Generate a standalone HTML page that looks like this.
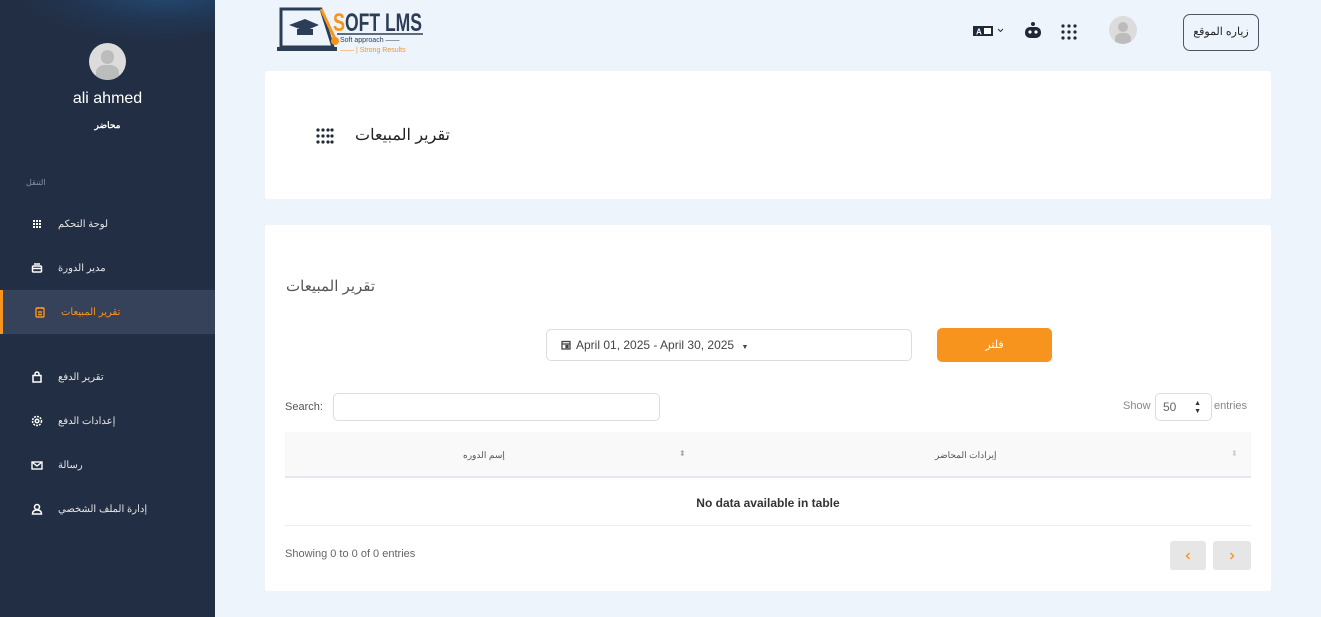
<!DOCTYPE html>
<html><head><meta charset="utf-8"><style>
*{box-sizing:border-box;margin:0;padding:0}
body{width:1321px;height:617px;overflow:hidden;background:#edf4fc;font-family:"Liberation Sans","Noto Sans CJK SC",sans-serif;position:relative;color:#333}
.sb{position:absolute;left:0;top:0;width:215px;height:617px;background:#222e43;overflow:hidden}
.sb .wave{position:absolute;left:20px;top:-50px;width:240px;height:90px;border-radius:50%;background:radial-gradient(ellipse at 60% 40%,rgba(40,100,160,.6) 0%,rgba(31,68,112,.35) 45%,rgba(34,46,67,0) 75%)}
.av{position:absolute;border-radius:50%;background:#dcdcdc;overflow:hidden}
.av:before{content:"";position:absolute;left:32%;top:20%;width:36%;height:36%;border-radius:50%;background:#bcbcbc}
.av:after{content:"";position:absolute;left:20%;top:60%;width:60%;height:50%;border-radius:40% 40% 0 0;background:#bcbcbc}
.it{position:absolute;left:0;width:215px;height:44px;color:#e6e6e6;font-size:10px;display:flex;align-items:center}
.it .ic{position:absolute;left:31px;width:12px;height:12px}
.it span{position:absolute;left:58px}
.card{position:absolute;left:265px;width:1006px;background:#fff;border-radius:3px}
.t{position:absolute;white-space:nowrap}
</style></head><body>
<div class="sb">
<div class="wave"></div>
<div class="av" style="left:89px;top:43px;width:37px;height:37px"></div>
<div class="t" style="left:0;width:215px;text-align:center;top:90px;color:#fff;font-size:16px">ali ahmed</div>
<div class="t" style="left:0;width:215px;text-align:center;top:120px;color:#fff;font-size:9px;font-weight:bold">محاضر</div>
<div class="t" style="left:26px;top:178px;color:#8a93a3;font-size:8px">التنقل</div>
<div class="it" style="top:202px"><svg class="ic" viewBox="0 0 12 12" fill="#fff"><rect x="2" y="2" width="2" height="2"/><rect x="5" y="2" width="2" height="2"/><rect x="8" y="2" width="2" height="2"/><rect x="2" y="5" width="2" height="2"/><rect x="5" y="5" width="2" height="2"/><rect x="8" y="5" width="2" height="2"/><rect x="2" y="8" width="2" height="2"/><rect x="5" y="8" width="2" height="2"/><rect x="8" y="8" width="2" height="2"/></svg><span>لوحة التحكم</span></div>
<div class="it" style="top:246px"><svg class="ic" viewBox="0 0 12 12" fill="none" stroke="#fff" stroke-width="1.5"><rect x="1.5" y="4" width="9" height="6" rx="1"/><path d="M3 2h6M1.5 6.5h9"/></svg><span>مدير الدورة</span></div>
<div class="it" style="top:290px;background:#36425a;color:#f7941d;border-left:3px solid #f7941d"><svg class="ic" viewBox="0 0 12 12" fill="none" stroke="#f7941d" stroke-width="1.4" style="left:31px"><rect x="2" y="2" width="8" height="9" rx="1"/><path d="M4 1v2M8 1v2M4 6h4M4 8.5h4"/></svg><span style="left:58px">تقرير المبيعات</span></div>
<div class="it" style="top:355px"><svg class="ic" viewBox="0 0 12 12" fill="none" stroke="#fff" stroke-width="1.5"><rect x="2" y="4.5" width="8" height="6.5"/><path d="M4 4.5V3a2 2 0 0 1 4 0v1.5"/></svg><span>تقرير الدفع</span></div>
<div class="it" style="top:399px"><svg class="ic" viewBox="0 0 12 12" fill="none" stroke="#fff" stroke-width="1.5"><circle cx="6" cy="6" r="4.5" stroke-dasharray="2 1"/><circle cx="6" cy="6" r="1.8"/></svg><span>إعدادات الدفع</span></div>
<div class="it" style="top:443px"><svg class="ic" viewBox="0 0 12 12" fill="none" stroke="#fff" stroke-width="1.4"><rect x="1" y="3" width="10" height="7"/><path d="M1 3l5 4 5-4"/></svg><span>رسالة</span></div>
<div class="it" style="top:487px"><svg class="ic" viewBox="0 0 12 12" fill="none" stroke="#fff" stroke-width="1.5"><circle cx="6" cy="4" r="2.5"/><path d="M1.5 11c0-3 2-4 4.5-4s4.5 1 4.5 4z"/></svg><span>إدارة الملف الشخصي</span></div>
</div>

<svg style="position:absolute;left:277px;top:5px" width="150" height="52" viewBox="0 0 150 52">
<path d="M4 4h40l12 38H4z" fill="none" stroke="#2c3e57" stroke-width="3"/>
<path d="M0 42h60v4H0z" fill="#2c3e57"/>
<path d="M12 20l16-6 14 6-14 6z" fill="#2c3e57"/><path d="M20 24v6h16v-6" fill="#2c3e57"/>
<path d="M44 4l14 30" stroke="#f7941d" stroke-width="3"/><circle cx="58" cy="36" r="4" fill="#f7941d"/>
<text x="56" y="26" font-family="Liberation Sans" font-weight="bold" font-size="25" fill="#f7941d" textLength="12" lengthAdjust="spacingAndGlyphs">S</text>
<text x="68" y="26" font-family="Liberation Sans" font-weight="bold" font-size="25" fill="#2c3e57" textLength="77" lengthAdjust="spacingAndGlyphs">OFT LMS</text>
<path d="M60 29h86" stroke="#2c3e57" stroke-width="1.5"/>
<text x="63" y="37" font-size="7" fill="#2c3e57" font-family="Liberation Sans">Soft approach ——</text>
<text x="63" y="47" font-size="7" fill="#f7941d" font-family="Liberation Sans">—— | Strong Results</text>
</svg>

<svg style="position:absolute;left:973px;top:25px" width="34" height="12" viewBox="0 0 34 12"><rect x="0" y="1" width="20" height="10" fill="#1f2937"/><text x="3" y="9.5" font-size="8" fill="#fff" font-weight="bold" font-family="Liberation Sans">A</text><rect x="11" y="3" width="7" height="6" fill="#fff"/><path d="M25 4l2.5 2.5L30 4" stroke="#333" fill="none"/></svg>
<svg style="position:absolute;left:1024px;top:22px" width="18" height="17" viewBox="0 0 18 17"><circle cx="9" cy="2" r="2" fill="#1f2937"/><rect x="1" y="5" width="16" height="11" rx="5" fill="#1f2937"/><circle cx="6" cy="10" r="1.6" fill="#fff"/><circle cx="12" cy="10" r="1.6" fill="#fff"/></svg>
<svg style="position:absolute;left:1061px;top:24px" width="16" height="16" viewBox="0 0 16 16" fill="#1f2937"><circle cx="2" cy="2" r="1.6"/><circle cx="8" cy="2" r="1.6"/><circle cx="14" cy="2" r="1.6"/><circle cx="2" cy="8" r="1.6"/><circle cx="8" cy="8" r="1.6"/><circle cx="14" cy="8" r="1.6"/><circle cx="2" cy="14" r="1.6"/><circle cx="8" cy="14" r="1.6"/><circle cx="14" cy="14" r="1.6"/></svg>
<div class="av" style="left:1109px;top:16px;width:28px;height:28px"></div>
<div style="position:absolute;left:1183px;top:14px;width:76px;height:37px;border:1px solid #4b5563;border-radius:7px;font-size:11px;text-align:center;line-height:35px;color:#222">زياره الموقع</div>

<div class="card" style="top:71px;height:128px">
<div class="t" style="left:90px;top:54px;font-size:16px;color:#222">تقرير المبيعات</div>
<svg style="position:absolute;left:51px;top:57px" width="18" height="16" viewBox="0 0 18 16" fill="#1f2937"><circle cx="2" cy="2" r="1.6"/><circle cx="7" cy="2" r="1.6"/><circle cx="12" cy="2" r="1.6"/><circle cx="16" cy="2" r="1.6"/><circle cx="2" cy="8" r="1.6"/><circle cx="7" cy="8" r="1.6"/><circle cx="12" cy="8" r="1.6"/><circle cx="16" cy="8" r="1.6"/><circle cx="2" cy="14" r="1.6"/><circle cx="7" cy="14" r="1.6"/><circle cx="12" cy="14" r="1.6"/><circle cx="16" cy="14" r="1.6"/></svg>
</div>

<div class="card" style="top:225px;height:366px">
<div class="t" style="left:21px;top:52px;font-size:15px;color:#555">تقرير المبيعات</div>
<div style="position:absolute;left:281px;top:104px;width:366px;height:32px;border:1px solid #ddd;border-radius:5px;font-size:12px;color:#444;line-height:30px;padding-left:29px">April 01, 2025 - April 30, 2025 <span style="font-size:7px;margin-left:4px">▼</span>
<svg style="position:absolute;left:14px;top:10px" width="10" height="10" viewBox="0 0 10 10" fill="none" stroke="#444" stroke-width="1.3"><rect x="1" y="1.5" width="8" height="7.5"/><path d="M1 4h8"/><rect x="5" y="5.5" width="2" height="2" fill="#444"/></svg></div>
<div style="position:absolute;left:672px;top:103px;width:115px;height:34px;background:#f7941d;border-radius:5px;color:#fff;font-size:11px;text-align:center;line-height:34px">فلتر</div>
<div class="t" style="left:20px;top:176px;font-size:11px;color:#555">Search:</div>
<div style="position:absolute;left:68px;top:168px;width:327px;height:28px;border:1px solid #ddd;border-radius:5px"></div>
<div class="t" style="left:858px;top:175px;font-size:11px;color:#888">Show</div>
<div style="position:absolute;left:890px;top:168px;width:57px;height:28px;border:1px solid #ddd;border-radius:5px;font-size:12px;color:#666;line-height:26px;padding-left:7px">50<span style="position:absolute;right:10px;font-size:7px;color:#333;line-height:8px;top:6px">▲<br>▼</span></div>
<div class="t" style="left:949px;top:175px;font-size:11px;color:#888">entries</div>
<div style="position:absolute;left:20px;top:207px;width:966px;height:46px;background:#f9f9f9;border-bottom:2px solid #e3e8ef"></div>
<div class="t" style="left:198px;top:225px;font-size:9px;color:#555">إسم الدوره</div>
<div class="t" style="left:414px;top:224px;font-size:8px;color:#aaa">⬍</div>
<div class="t" style="left:670px;top:225px;font-size:9px;color:#555">إيرادات المحاضر</div>
<div class="t" style="left:966px;top:224px;font-size:8px;color:#ccc">⬍</div>
<div class="t" style="left:0;width:1006px;text-align:center;top:271px;font-size:12px;font-weight:bold;color:#333">No data available in table</div>
<div style="position:absolute;left:20px;top:300px;width:966px;border-top:1px solid #eee"></div>
<div class="t" style="left:20px;top:323px;font-size:11px;color:#666">Showing 0 to 0 of 0 entries</div>
<div style="position:absolute;left:905px;top:316px;width:36px;height:29px;background:#e6e6e6;border-radius:3px"><svg style="position:absolute;left:15px;top:11px" width="6" height="8" viewBox="0 0 6 8"><path d="M4.5 1L1.5 4l3 3" stroke="#f7941d" stroke-width="1.4" fill="none"/></svg></div>
<div style="position:absolute;left:948px;top:316px;width:38px;height:29px;background:#e6e6e6;border-radius:3px"><svg style="position:absolute;left:16px;top:11px" width="6" height="8" viewBox="0 0 6 8"><path d="M1.5 1l3 3-3 3" stroke="#f7941d" stroke-width="1.4" fill="none"/></svg></div>
</div>
</body></html>
